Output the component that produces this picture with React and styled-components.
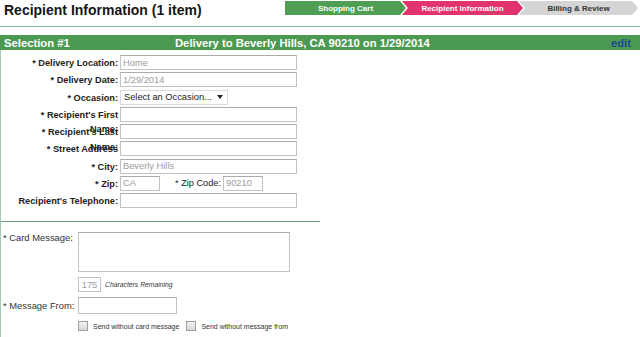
import React from 'react'
import styled, { createGlobalStyle } from 'styled-components'

const GlobalStyle = createGlobalStyle`
  html, body {
    margin: 0;
    padding: 0;
    background: #fff;
  }
  body {
    font-family: "Liberation Sans", Arial, sans-serif;
    color: #222;
  }
  input, textarea, select {
    font-family: inherit;
  }
`

const stepColors = {
  done: { bg: '#4e9e53', fg: '#fff' },
  current: { bg: '#e2336c', fg: '#fff' },
  todo: { bg: '#d5d5d5', fg: '#333' },
}

const App = () => {
  return (
    <Page>
      <GlobalStyle />
      <TopBar>
        <Title>Recipient Information (1 item)</Title>
        <Steps>
          <Step $kind="done" $first>Shopping Cart</Step>
          <Step $kind="current">Recipient Information</Step>
          <Step $kind="todo" $width={119}>Billing &amp; Review</Step>
        </Steps>
      </TopBar>

      <SelectionBar>
        <SelTitle>Selection #1</SelTitle>
        <SelDelivery>Delivery to Beverly Hills, CA 90210 on 1/29/2014</SelDelivery>
        <EditLink href="#">edit</EditLink>
      </SelectionBar>

      <Panel>
        <AddressForm>
          <Label>* Delivery Location:</Label>
          <Field><TextInput defaultValue="Home" $muted readOnly /></Field>

          <Label>* Delivery Date:</Label>
          <Field><TextInput defaultValue="1/29/2014" $muted readOnly /></Field>

          <Label>* Occasion:</Label>
          <Field>
            <SelectBox>
              <span>Select an Occasion...</span>
              <Caret />
            </SelectBox>
          </Field>

          <Label>* Recipient's First Name:</Label>
          <Field><TextInput /></Field>

          <Label>* Recipient's Last Name:</Label>
          <Field><TextInput /></Field>

          <Label>* Street Address</Label>
          <Field><TextInput /></Field>

          <Label>* City:</Label>
          <Field><TextInput defaultValue="Beverly Hills" $muted readOnly /></Field>

          <Label>* Zip:</Label>
          <Field>
            <TextInput defaultValue="CA" $muted $width={40} readOnly />
            <InlineLabel>* Zip Code:</InlineLabel>
            <TextInput defaultValue="90210" $muted $width={40} readOnly />
          </Field>

          <Label>Recipient's Telephone:</Label>
          <Field><TextInput /></Field>
        </AddressForm>

        <CardForm>
          <CardLabel $top>* Card Message:</CardLabel>
          <MessageArea />

          <span />
          <CounterRow>
            <Counter>175</Counter>
            <Hint>Characters Remaining</Hint>
          </CounterRow>

          <CardLabel>* Message From:</CardLabel>
          <TextInput $width={99} $height={17} />

          <span />
          <CheckRow>
            <Check type="checkbox" />
            <CheckText>Send without card message</CheckText>
            <Check type="checkbox" />
            <CheckText>Send without message from</CheckText>
          </CheckRow>
        </CardForm>
      </Panel>
    </Page>
  )
}

export default App

const Page = styled.div`
  width: 640px;
  height: 337px;
  overflow: hidden;
  display: flex;
  flex-direction: column;
`

const TopBar = styled.div`
  height: 26px;
  flex: none;
  display: flex;
  justify-content: space-between;
  align-items: flex-start;
  padding: 0 2px 0 4px;
  border-bottom: 1px solid #86b597;
`

const Title = styled.h1`
  margin: 0;
  padding-top: 1.5px;
  font-size: 14px;
  line-height: 16px;
  font-weight: bold;
  color: #161616;
`

const Steps = styled.div`
  display: flex;
  margin-top: 1px;
  height: 14px;
`

const Step = styled.div`
  width: ${(p) => p.$width || 121}px;
  margin-left: ${(p) => (p.$first ? 0 : -4)}px;
  display: flex;
  align-items: center;
  justify-content: center;
  font-size: 8px;
  font-weight: bold;
  background: ${(p) => stepColors[p.$kind].bg};
  color: ${(p) => stepColors[p.$kind].fg};
  clip-path: ${(p) =>
    p.$first
      ? 'polygon(0 0, calc(100% - 6px) 0, 100% 50%, calc(100% - 6px) 100%, 0 100%)'
      : 'polygon(0 0, calc(100% - 6px) 0, 100% 50%, calc(100% - 6px) 100%, 0 100%, 6px 50%)'};
`

const SelectionBar = styled.div`
  margin-top: 8px;
  height: 15px;
  flex: none;
  display: flex;
  align-items: center;
  padding: 0 9px 0 4px;
  background: #4c9a52;
  font-size: 11.25px;
  font-weight: bold;
  color: #fff;
`

const SelTitle = styled.span`
  width: 171px;
  flex: none;
`

const SelDelivery = styled.span`
  flex: 1;
`

const EditLink = styled.a`
  color: #1b4b8c;
  text-decoration: none;
`

const Panel = styled.div`
  flex: 1;
  border-left: 1px solid #a9c9b0;
`

const AddressForm = styled.div`
  width: 319px;
  box-sizing: border-box;
  display: grid;
  grid-template-columns: 104px 177px;
  grid-auto-rows: 15px;
  column-gap: 2px;
  row-gap: 2.25px;
  padding: 5px 0 13px 13px;
  border-bottom: 1px solid #6f9d79;
`

const Label = styled.div`
  font-size: 9.2px;
  font-weight: bold;
  line-height: 14.5px;
  padding-top: 1px;
  text-align: right;
  color: #222;
  white-space: normal;
`

const Field = styled.div`
  display: flex;
  align-items: center;
`

const InlineLabel = styled.span`
  margin: 0 2px 0 15px;
  font-size: 9.2px;
  color: #222;
`

const TextInput = styled.input`
  box-sizing: border-box;
  width: ${(p) => (p.$width ? `${p.$width}px` : '100%')};
  height: ${(p) => p.$height || 15}px;
  margin: 0;
  padding: 0 2px;
  border: 1px solid #c2c2c2;
  border-top-color: #ababab;
  background: #fff;
  font-size: 9.3px;
  color: ${(p) => (p.$muted ? '#9c9c9c' : '#222')};
  outline: none;
`

const SelectBox = styled.div`
  box-sizing: border-box;
  width: 108px;
  height: 15px;
  display: flex;
  align-items: center;
  justify-content: space-between;
  padding: 0 4px 0 3px;
  border: 1px solid #dadada;
  font-size: 9.3px;
  color: #222;
`

const Caret = styled.span`
  width: 0;
  height: 0;
  border-left: 3px solid transparent;
  border-right: 3px solid transparent;
  border-top: 4px solid #222;
`

const CardForm = styled.div`
  display: grid;
  grid-template-columns: 75px auto;
  justify-content: start;
  align-items: center;
  row-gap: 5px;
  padding: 10px 0 0 2px;
`

const CardLabel = styled.div`
  align-self: ${(p) => (p.$top ? 'start' : 'center')};
  font-size: 9.4px;
  line-height: 10px;
  padding-top: ${(p) => (p.$top ? 1 : 0)}px;
  color: #333;
`

const MessageArea = styled.textarea`
  box-sizing: border-box;
  width: 212px;
  height: 40px;
  margin: 0;
  border: 1px solid #c2c2c2;
  border-top-color: #ababab;
  resize: none;
  outline: none;
`

const CounterRow = styled.div`
  display: flex;
  align-items: center;
`

const Counter = styled.div`
  box-sizing: border-box;
  width: 23px;
  height: 15px;
  display: flex;
  align-items: center;
  justify-content: center;
  border: 1px solid #c2c2c2;
  font-size: 9.3px;
  color: #9c9c9c;
`

const Hint = styled.span`
  margin-left: 4px;
  font-size: 6.8px;
  font-style: italic;
  color: #333;
`

const CheckRow = styled.div`
  display: flex;
  align-items: center;
  margin-top: 2px;
  height: 10px;
`

const Check = styled.input`
  appearance: none;
  box-sizing: border-box;
  width: 10px;
  height: 10px;
  margin: 0 5px 0 0;
  border: 1px solid #9e9e9e;
  background: linear-gradient(#f2f2f2, #d8d8d8);
  & ~ & {
    margin-left: 7px;
  }
`

const CheckText = styled.span`
  font-size: 7px;
  color: #333;
`
